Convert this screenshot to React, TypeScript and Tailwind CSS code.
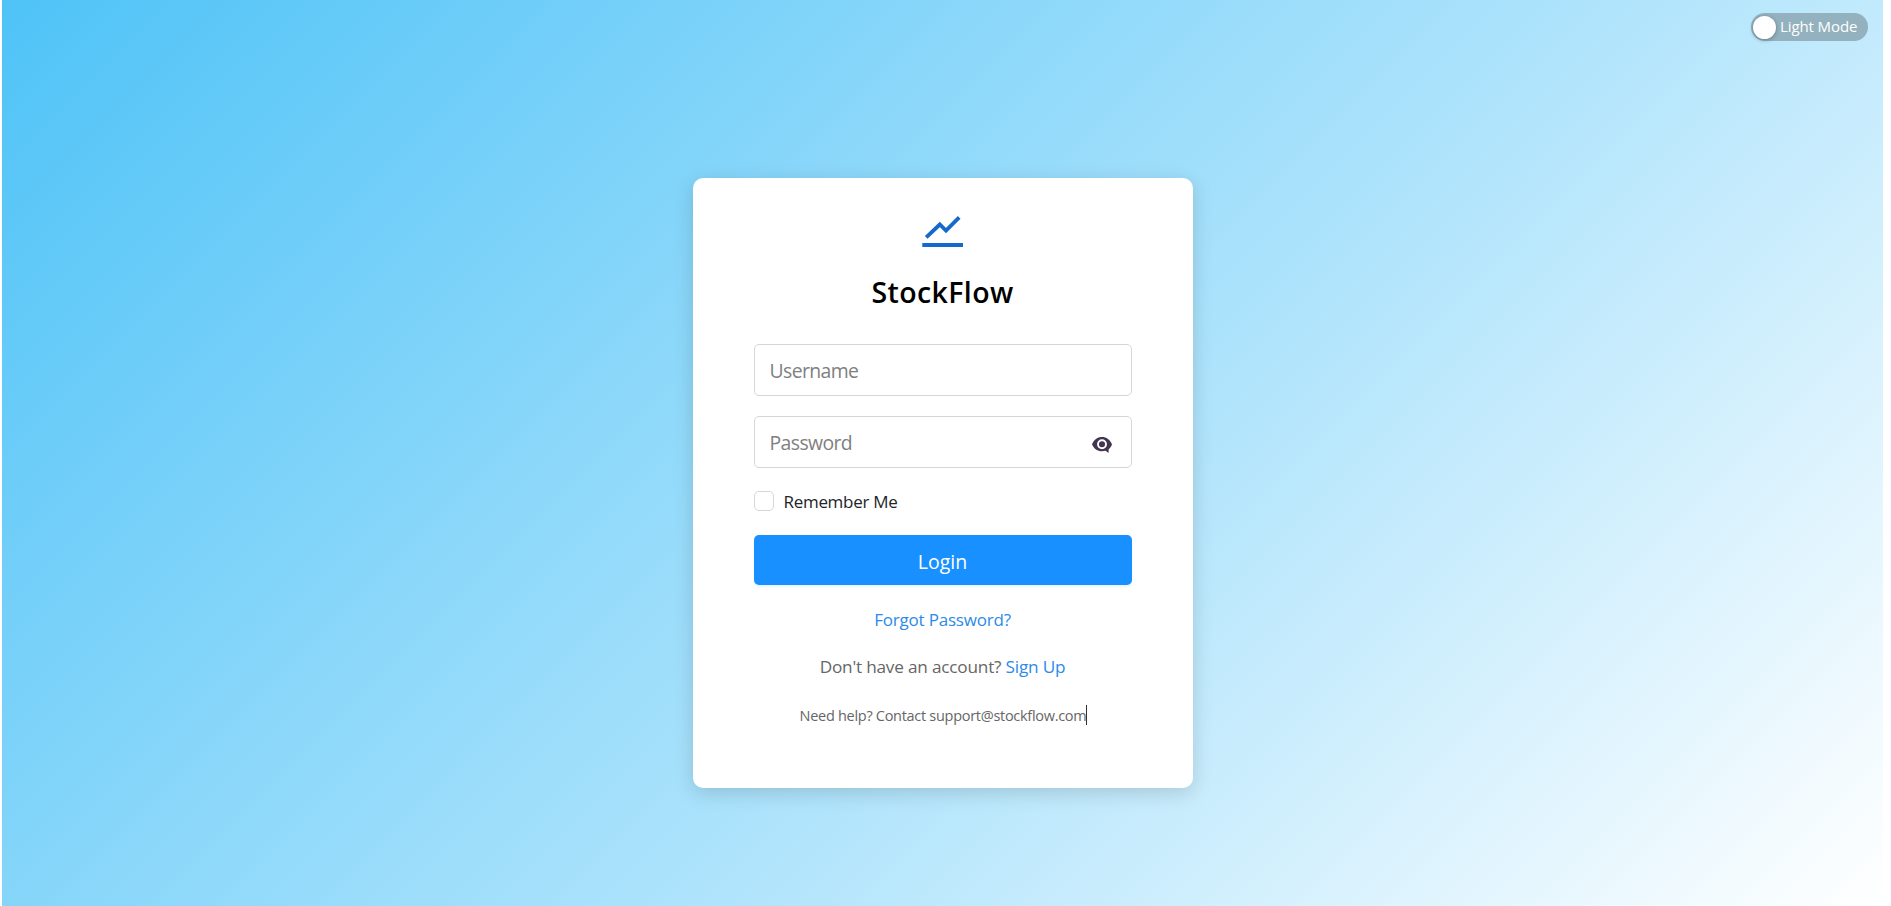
import type { ReactNode } from "react";

function ChartIcon() {
  return (
    <svg viewBox="0 0 42 32" className="h-8 w-[42px]" aria-hidden="true">
      <path d="M4.200 22.400 17.800 9.500l6.200 6L37.200 2.300" fill="none" stroke="#1469cb" strokeWidth="3.800" />
      <path d="M.3 28h40.700v4H.3z" fill="#1469cb" />
    </svg>
  );
}

function EyeIcon() {
  return (
    <svg viewBox="0 0 20 16" className="h-4 w-5" aria-hidden="true">
      <path
        d="M10 0C5.600 0 1.800 2.700 0 7.300c1.800 4.400 5.600 7 10 7 1.300 0 2.500-.2 3.600-.5l2.900 2.200.2-3.800C18.200 11 19.400 9.300 20 7.300 18.200 2.700 14.400 0 10 0z"
        fill="#43344f"
      />
      <circle cx="10" cy="7.300" r="4" fill="none" stroke="#fff" strokeWidth="1.900" />
    </svg>
  );
}

function Field({ type, placeholder, children }: { type: string; placeholder: string; children?: ReactNode }) {
  return (
    <div className="flex h-[52px] items-center rounded-[5px] border border-[#d5d6d8] bg-white pr-[19px] pl-[15px]">
      <input
        type={type}
        placeholder={placeholder}
        className="min-w-0 flex-1 bg-transparent pt-[2px] text-[19.4px] tracking-[-0.6px] outline-none placeholder:text-[#808080]"
      />
      {children}
    </div>
  );
}

export default function App() {
  return (
    <div className="h-[906px] w-full overflow-hidden bg-white pr-2 pl-0.5 font-['Open_Sans','Noto_Sans',sans-serif]">
      <div className="flex h-full flex-col items-center bg-[linear-gradient(135deg,#4fc3f7_0%,#b3e5fc_60%,#ffffff_100%)]">
        <header className="flex h-[178px] w-full shrink-0 items-start justify-end pt-[13px] pr-[15px]">
          <button className="flex h-7 w-[117px] items-center rounded-full bg-[#93b1be] pl-[2px] text-[15px] whitespace-nowrap text-white">
            <span className="mr-[4px] size-[23px] shrink-0 rounded-full bg-white shadow-[0_1px_4px_rgba(0,0,0,0.3)]" />
            <span className="pb-0.5 tracking-[-0.1px]">Light Mode</span>
          </button>
        </header>
        <main className="flex h-[610px] w-[500px] shrink-0 flex-col rounded-[10px] bg-white px-[61px] pt-[37px] shadow-[0_5px_20px_rgba(0,0,0,0.15)]">
          <div className="flex h-8 justify-center">
            <ChartIcon />
          </div>
          <h1 className="mt-[25px] text-center text-[28.5px] leading-[40px] font-semibold tracking-[0.4px] whitespace-nowrap text-black">
            StockFlow
          </h1>
          <form className="mt-8 flex flex-col" onSubmit={(e) => e.preventDefault()}>
            <Field type="text" placeholder="Username" />
            <div className="h-5" />
            <Field type="password" placeholder="Password">
              <button type="button" aria-label="Show password" className="pt-[5px]">
                <EyeIcon />
              </button>
            </Field>
            <label className="mt-[23px] flex h-5 items-center text-[17px] tracking-[-0.3px] whitespace-nowrap text-[#212529]">
              <input
                type="checkbox"
                className="mr-[10px] size-5 appearance-none rounded-[5px] border border-[#d5d6d8] bg-white"
              />
              <span className="pt-0.5">Remember Me</span>
            </label>
            <button
              type="submit"
              className="mt-6 h-[50px] rounded-[5px] bg-[#1890ff] pt-[3px] text-[19.5px] text-white shadow-[0_2px_2px_rgba(24,144,255,0.1)]"
            >
              Login
            </button>
          </form>
          <a className="mt-[23px] text-center text-[17px] leading-6 tracking-[-0.2px] whitespace-nowrap text-[#2b8aeb]">
            Forgot Password?
          </a>
          <p className="mt-[23px] text-center text-[17.2px] leading-6 tracking-[-0.2px] whitespace-nowrap text-[#666]">
            Don't have an account? <a className="text-[#2b8aeb]">Sign Up</a>
          </p>
          <p className="mt-[26px] flex h-5 justify-center pl-[2px] text-[14.5px] leading-[22px] tracking-[-0.29px] whitespace-nowrap text-[#666]">
            <span>Need help? Contact support@stockflow.com</span>
            <span className="h-5 w-px bg-[#333]" />
          </p>
        </main>
      </div>
    </div>
  );
}
